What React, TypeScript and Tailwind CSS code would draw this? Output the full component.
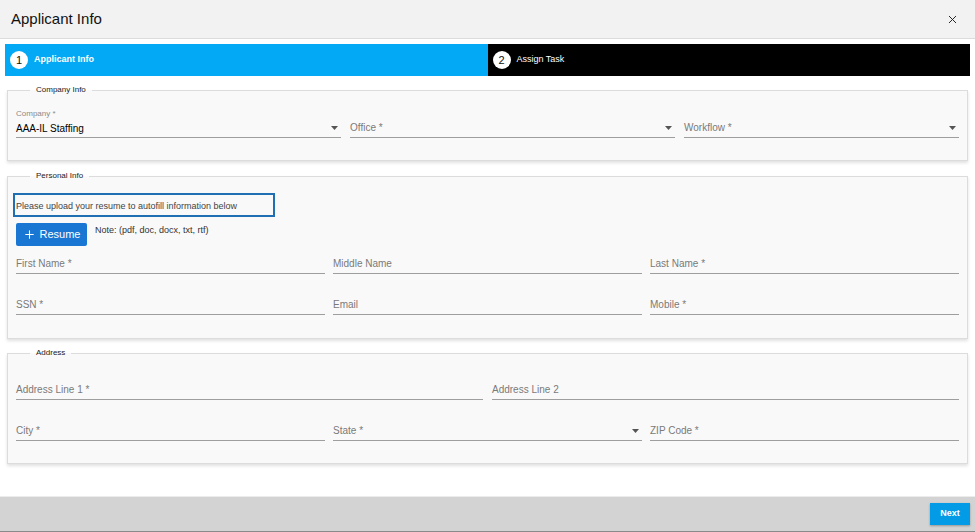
import { X, Plus } from "lucide-react"

function Caret() {
  return (
    <svg width="7" height="4" viewBox="0 0 7 4" className="shrink-0">
      <path d="M0 0 L7 0 L3.5 4 Z" fill="#555" />
    </svg>
  )
}

function Field({ label, select = false }: { label: string; select?: boolean }) {
  return (
    <div className="flex h-[20px] items-center justify-between border-b border-[#9e9e9e] pr-[3px]">
      <span className="text-[10px] text-[#7a7a7a]">{label}</span>
      {select && <Caret />}
    </div>
  )
}

function Section({ title, children, className = "" }: { title: string; children: React.ReactNode; className?: string }) {
  return (
    <fieldset
      className={`mx-[7px] border border-[#dcdcdc] bg-[#f9f9f9] px-[8px] shadow-[0_2px_3px_rgba(0,0,0,0.12)] ${className}`}
    >
      <legend className="ml-[14px] px-[6px] text-[8px] leading-[10px] text-[#222]">{title}</legend>
      {children}
    </fieldset>
  )
}

export default function App() {
  return (
    <div className="flex h-[532px] w-[975px] flex-col bg-white font-['Liberation_Sans',Arial,sans-serif]">
      {/* Header */}
      <div className="flex h-[39px] shrink-0 items-center justify-between border-b border-[#dcdcdc] bg-[#f2f2f2] pl-[11px] pr-[16px]">
        <h1 className="text-[15px] text-[#111]">Applicant Info</h1>
        <X className="h-[13px] w-[13px] text-[#222]" strokeWidth={1.8} />
      </div>

      {/* Stepper */}
      <div className="mx-[5px] mt-[5px] grid h-[32px] grid-cols-2">
        <div className="flex items-center gap-[6px] bg-[#03a9f4] pl-[5px]">
          <span className="flex h-[18px] w-[18px] items-center justify-center rounded-full bg-white text-[11px] text-[#111]">1</span>
          <span className="text-[9px] font-bold text-white">Applicant Info</span>
        </div>
        <div className="flex items-center gap-[6px] bg-black pl-[5px]">
          <span className="flex h-[18px] w-[18px] items-center justify-center rounded-full bg-white text-[11px] text-[#111]">2</span>
          <span className="text-[9px] text-white">Assign Task</span>
        </div>
      </div>

      {/* Company Info */}
      <Section title="Company Info" className="mt-[9px] pb-[22px]">
        <div className="mt-[14px] grid grid-cols-[325px_325px_275px] items-end gap-[9px]">
          <div>
            <div className="text-[8px] leading-[10px] text-[#8a8a8a]">Company *</div>
            <div className="flex h-[19px] items-center justify-between border-b border-[#9e9e9e] pr-[3px]">
              <span className="text-[10px] text-black">AAA-IL Staffing</span>
              <Caret />
            </div>
          </div>
          <Field label="Office *" select />
          <Field label="Workflow *" select />
        </div>
      </Section>

      {/* Personal Info */}
      <Section title="Personal Info" className="mt-[10px] pb-[23px]">
        <div className="-ml-[3px] mt-[12px] flex h-[24px] w-[262px] items-end border-2 border-[#1f6fb2] pb-[2px] pl-[1px]">
          <span className="text-[9px] text-[#444]">Please upload your resume to autofill information below</span>
        </div>
        <div className="mt-[6px] flex items-start gap-[8px]">
          <button className="flex h-[23px] w-[71px] items-center justify-center gap-[4px] rounded-[2px] bg-[#1976d2] text-[11px] text-white">
            <Plus className="h-[13px] w-[13px]" strokeWidth={2} />
            Resume
          </button>
          <span className="mt-[1px] text-[9px] text-[#333]">Note: (pdf, doc, docx, txt, rtf)</span>
        </div>
        <div className="mt-[8px] grid grid-cols-3 gap-[8px]">
          <Field label="First Name *" />
          <Field label="Middle Name" />
          <Field label="Last Name *" />
        </div>
        <div className="mt-[21px] grid grid-cols-3 gap-[8px]">
          <Field label="SSN *" />
          <Field label="Email" />
          <Field label="Mobile *" />
        </div>
      </Section>

      {/* Address */}
      <Section title="Address" className="mt-[9px] pb-[22px]">
        <div className="mt-[22px] grid grid-cols-2 gap-[9px]">
          <Field label="Address Line 1 *" />
          <Field label="Address Line 2" />
        </div>
        <div className="mt-[21px] grid grid-cols-3 gap-[8px]">
          <Field label="City *" />
          <Field label="State *" select />
          <Field label="ZIP Code *" />
        </div>
      </Section>

      <div className="flex-1" />

      {/* Footer */}
      <div className="flex h-[36px] shrink-0 items-center justify-end border-t border-[#ececec] border-b border-b-[#8a8a8a] bg-[#d3d3d3] pr-[5px]">
        <button className="h-[22px] w-[40px] bg-[#039be5] text-[9px] font-bold text-white shadow-[0_1px_2px_rgba(0,0,0,0.3)]">
          Next
        </button>
      </div>
    </div>
  )
}
